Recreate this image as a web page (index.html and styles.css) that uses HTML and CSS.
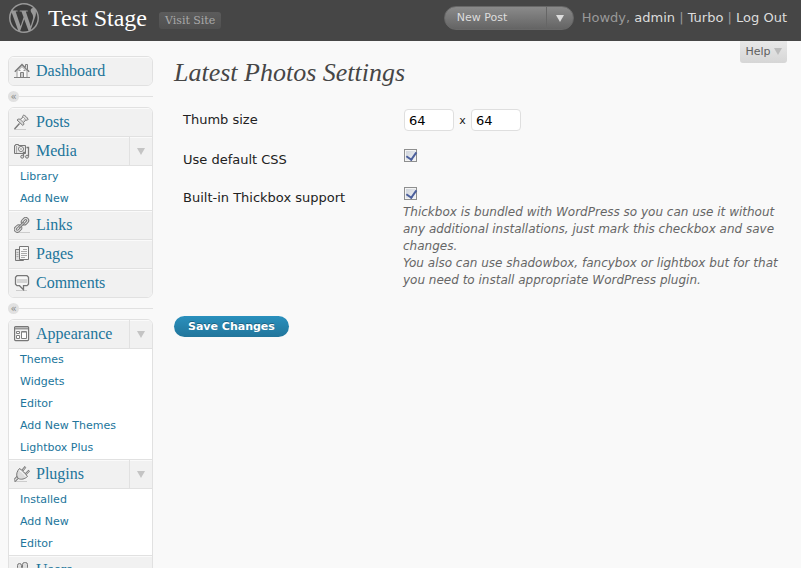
FILE: index.html
```html
<!DOCTYPE html>
<html lang="en">
<head>
<meta charset="utf-8">
<title>Latest Photos Settings</title>
<link rel="stylesheet" href="styles.css">
</head>
<body>
<header class="topbar">
  <svg class="logo" viewBox="0 0 24 24" aria-hidden="true"><circle cx="12" cy="12" r="11.4" fill="#3b3b3b"/><path fill="#999" d="M21.469 6.825c.84 1.537 1.318 3.3 1.318 5.175 0 3.979-2.156 7.456-5.363 9.325l3.295-9.527c.615-1.54.82-2.771.82-3.864 0-.405-.026-.78-.07-1.11m-7.981.105c.647-.03 1.232-.105 1.232-.105.582-.075.514-.93-.067-.899 0 0-1.755.135-2.88.135-1.064 0-2.85-.15-2.85-.15-.585-.03-.661.855-.075.885 0 0 .54.061 1.125.09l1.68 4.605-2.37 7.08L5.354 6.9c.649-.03 1.234-.1 1.234-.1.585-.075.516-.93-.065-.896 0 0-1.746.138-2.874.138-.2 0-.438-.008-.69-.015C4.911 3.15 8.235 1.215 12 1.215c2.809 0 5.365 1.072 7.286 2.833-.046-.003-.091-.009-.141-.009-1.06 0-1.812.923-1.812 1.914 0 .89.513 1.643 1.06 2.531.411.72.89 1.643.89 2.977 0 .915-.354 1.994-.821 3.479l-1.075 3.585-3.9-11.61.001.014zM12 22.784c-1.059 0-2.081-.153-3.048-.437l3.237-9.406 3.315 9.087c.024.053.05.101.078.149-1.12.393-2.325.609-3.582.609M1.211 12c0-1.564.336-3.05.935-4.39L7.29 21.709C3.694 19.96 1.212 16.271 1.211 12M12 0C5.385 0 0 5.385 0 12s5.385 12 12 12 12-5.385 12-12S18.615 0 12 0"/></svg>
  <a class="site-title" href="#">Test Stage</a>
  <a class="visit" href="#">Visit Site</a>
  <div class="quick">
    <a class="quick-main" href="#">New Post</a>
    <button class="quick-toggle" type="button" aria-label="More actions"><span class="arrow"></span></button>
  </div>
  <div class="user">Howdy, <a href="#">admin</a> | <a href="#">Turbo</a> | <a href="#">Log Out</a></div>
</header>

<div class="page">
  <nav class="sidebar">
    <ul class="menu">
      <li><div class="row">
        <svg class="icon" viewBox="0 0 16 16"><path d="M3 8.500 8 3.500l5 5v6H3z" fill="#f8f8f8" stroke="#999"/><path d="M.8 8.700 8 1.500l7.200 7.200" fill="none" stroke="#777" stroke-width="1.400"/><path d="M11.500 4.500v-3h2v5" fill="#ddd" stroke="#808080"/><path d="M6.500 14V9.500h3V14" fill="#ccc" stroke="#808080"/><path d="M0 14.500h16" stroke="#808080"/><path d="M5 7.500h1.500M9.500 7.500H11" stroke="#999"/></svg>
        <a href="#">Dashboard</a></div></li>
    </ul>
    <div class="separator"><button type="button" aria-label="Collapse menu">«</button></div>

    <ul class="menu">
      <li><div class="row">
        <svg class="icon" viewBox="0 0 16 16"><path d="M0 15.500h12" stroke="#ccc"/><path d="M.5 15 5.500 9.500" stroke="#777" stroke-width="1.400"/><path d="M9.500 1.200C10.500.8 14 4 14 5.500c-.5 1-1.800.8-2.400.6L9.500 8.500c.6 1.200.3 2.500-.6 3L3 6c.6-1 2-1.200 3.200-.6L8.700 3.300c-.2-.7-.1-1.700.8-2.100z" fill="#dcdcdc" stroke="#777"/><path d="M6.200 5.600 9.300 8.500M9 3.200 11.500 5.700" stroke="#888" stroke-width=".8"/><path d="M8 6 10 4" stroke="#fff"/></svg>
        <a href="#">Posts</a></div></li>
      <li><div class="row">
        <svg class="icon" viewBox="0 0 16 16"><path d="M.5 2.500h1v-1h3v1h7v8H.5z" fill="#e4e4e4" stroke="#777"/><path d="M2.500 3v7" stroke="#aaa"/><circle cx="7" cy="6" r="2.500" fill="#fff" stroke="#777"/><circle cx="7" cy="6" r="1" fill="#aaa"/><path d="M9.500 14V9.500h2M14.500 13.500v-9h-2" fill="none" stroke="#777" stroke-width="1.300"/><circle cx="8.200" cy="13.700" r="1.500" fill="#ddd" stroke="#777"/><circle cx="13" cy="13.700" r="1.500" fill="#ddd" stroke="#777"/></svg>
        <a href="#">Media</a><button class="toggle" type="button" aria-label="Toggle Media"><span class="arrow"></span></button></div>
        <ul class="sub"><li><a href="#">Library</a></li><li><a href="#">Add New</a></li></ul></li>
      <li><div class="row">
        <svg class="icon" viewBox="0 0 16 16"><path d="M4 15.500h12" stroke="#ccc"/><g fill="none"><g stroke="#777" stroke-width="3"><rect x="8" y="2.200" width="6" height="4" rx="2" transform="rotate(-45 11 4.200)"/><rect x="1" y="9.600" width="6" height="4" rx="2" transform="rotate(-45 4 11.600)"/></g><g stroke="#ddd" stroke-width="1.200"><rect x="8" y="2.200" width="6" height="4" rx="2" transform="rotate(-45 11 4.200)"/><rect x="1" y="9.600" width="6" height="4" rx="2" transform="rotate(-45 4 11.600)"/></g></g><path d="M5 10.500 10 5.500" stroke="#777" stroke-width="2.600"/><path d="M5 10.500 10 5.500" stroke="#e4e4e4"/></svg>
        <a href="#">Links</a></div></li>
      <li><div class="row">
        <svg class="icon" viewBox="0 0 16 16"><path d="M1.500 3.500h8v11h-8z" fill="#ddd" stroke="#777"/><path d="M2.500 6.500h2M2.500 8.500h2M2.500 10.500h2" stroke="#aaa"/><path d="M5.500 .5h9v13h-9z" fill="#f8f8f8" stroke="#777"/><path d="M9 3.500h4M7 5.500h6M7 7.500h6M7 9.500h6M7 11.500h4" stroke="#aaa"/></svg>
        <a href="#">Pages</a></div></li>
      <li><div class="row">
        <svg class="icon" viewBox="0 0 16 16"><path d="M2 15.500h11" stroke="#ccc"/><path d="M3 .7h10l1.500 1.500v7L13 10.700H9.500v4l-4-4H3L1.500 9.200v-7z" fill="#f6f6f6" stroke="#777" stroke-width="1.300"/><path d="M3 4h10v4H3z" fill="#d4d4d4"/></svg>
        <a href="#">Comments</a></div></li>
    </ul>
    <div class="separator"><button type="button" aria-label="Collapse menu">«</button></div>

    <ul class="menu">
      <li><div class="row">
        <svg class="icon" viewBox="0 0 16 16"><rect x=".6" y=".6" width="14" height="14" rx="1" fill="#f4f4f4" stroke="#777" stroke-width="1.200"/><path d="M1 2.500h13" stroke="#999" stroke-width="2"/><path d="M2.500 5.500h3v2h-3zM2.500 9.500h3v3h-3zM7.500 5.500h5v7h-5z" fill="#fff" stroke="#808080"/><path d="M8 6.500h4" stroke="#bbb"/></svg>
        <a href="#">Appearance</a><button class="toggle" type="button" aria-label="Toggle Appearance"><span class="arrow"></span></button></div>
        <ul class="sub"><li><a href="#">Themes</a></li><li><a href="#">Widgets</a></li><li><a href="#">Editor</a></li><li><a href="#">Add New Themes</a></li><li><a href="#">Lightbox Plus</a></li></ul></li>
      <li><div class="row">
        <svg class="icon" viewBox="0 0 16 16"><path d="M1 15.500h12" stroke="#ccc"/><path d="M0 15 4 11" stroke="#777" stroke-width="3.200"/><path d="M.5 14.500 4 11" stroke="#ddd" stroke-width="1.200"/><path d="M8 5 11.500.8M11.500 8.300 15.300 4.500" stroke="#777" stroke-width="2.200"/><path d="M8 5 11.300 1.200M11.500 8.300 15 4.800" stroke="#eee" stroke-width=".7"/><path d="M5.500 2.500C8 4 11.500 7.500 13.500 10.500 11 13 7 14 4.500 12.500L3.200 11C2 8.500 3 5 5.500 2.500z" fill="#dcdcdc" stroke="#777"/><path d="M5.500 4.500C8 6 10 8 11.700 10.500" stroke="#fff" fill="none"/></svg>
        <a href="#">Plugins</a><button class="toggle" type="button" aria-label="Toggle Plugins"><span class="arrow"></span></button></div>
        <ul class="sub"><li><a href="#">Installed</a></li><li><a href="#">Add New</a></li><li><a href="#">Editor</a></li></ul></li>
      <li><div class="row">
        <svg class="icon" viewBox="0 0 16 16"><rect x="3.500" y="1.500" width="4" height="6" rx="2" fill="#ddd" stroke="#777"/><rect x="8.500" y=".5" width="5" height="7" rx="2" fill="#ddd" stroke="#777"/><path d="M2 15V9.500h5V15M7.500 15V8.500h7V15" fill="#ddd" stroke="#777"/></svg>
        <a href="#">Users</a></div></li>
    </ul>
  </nav>

  <main class="content">
    <button class="help" type="button">Help <span class="arrow"></span></button>
    <h1>Latest Photos Settings</h1>
    <form>
      <div class="fields">
        <label for="w">Thumb size</label>
        <div class="size"><input id="w" type="text" value="64"><span>x</span><input type="text" value="64" aria-label="Thumb height"></div>
        <label for="css">Use default CSS</label>
        <div class="check"><input id="css" type="checkbox" checked></div>
        <label for="thick">Built-in Thickbox support</label>
        <div class="check"><input id="thick" type="checkbox" checked>
          <p>Thickbox is bundled with WordPress so you can use it without any additional installations, just mark this checkbox and save changes.<br>You also can use shadowbox, fancybox or lightbox but for that you need to install appropriate WordPress plugin.</p></div>
      </div>
      <button class="save" type="submit">Save Changes</button>
    </form>
  </main>
</div>
</body>
</html>
```
FILE: styles.css
```css
* { box-sizing: border-box; }
body {
  margin: 0;
  height: 100vh;
  overflow: hidden;
  background: #f9f9f9;
  color: #222;
  font: 13px/18px Verdana, "DejaVu Sans", sans-serif;
}
a { color: #21759b; text-decoration: none; }
ul { list-style: none; margin: 0; padding: 0; }
button { font: inherit; padding: 0; border: 0; background: none; cursor: pointer; }
.arrow {
  display: inline-block;
  border: 4px solid transparent;
  border-top: 7px solid #c4c4c4;
  border-bottom: 0;
}

/* Top bar */
.topbar {
  display: flex;
  align-items: center;
  height: 41px;
  padding: 0 14px 5px 9px;
  background: #464646;
}
.logo { width: 30px; height: 30px; margin-right: 9px; }
.site-title { color: #fff; font: 24px/30px Georgia, "Liberation Serif", serif; }
.visit {
  margin: 5px 0 0 12px;
  padding: 0 6px;
  border-radius: 3px;
  background: linear-gradient(#5c5c5c, #505050);
  color: #aaa;
  font: 11px/17px "DejaVu Serif", serif;
}
.quick {
  display: flex;
  width: 130px;
  height: 24px;
  margin: 0 8px 0 auto;
  border-radius: 12px;
  border: 1px solid #686868;
  background: linear-gradient(#8a8a8a, #646464);
}
.quick-main { flex: 1; padding-left: 12px; color: #ddd; font-size: 11px; line-height: 22px; }
.quick-toggle { width: 27px; border-left: 1px solid #666; line-height: 10px; }
.quick-toggle .arrow { border-top-color: #ddd; }
.user { color: #999; white-space: nowrap; }
.user a { color: #ddd; }

/* Sidebar */
.page { display: flex; }
.sidebar { flex: none; width: 145px; margin: 15px 0 0 8px; }
.menu {
  border: 1px solid #e1e1e1;
  border-radius: 6px;
  background: #fff;
  overflow: hidden;
}
.menu > li + li { border-top: 1px solid #e1e1e1; }
.row {
  display: flex;
  align-items: center;
  height: 28px;
  padding: 0 0 1px 5px;
  border-top: 1px solid #fafafa;
  background: #f1f1f1;
}
.icon { width: 16px; height: 16px; margin-right: 6px; }
.row a { flex: 1; font: 16px/20px Georgia, "Liberation Serif", serif; }
.toggle { width: 23px; height: 28px; border-left: 1px solid #e1e1e1; line-height: 10px; }
.sub { border-top: 1px solid #e1e1e1; font-size: 11px; line-height: 22px; }
.sub li { padding-left: 11px; }
.separator { display: flex; align-items: center; height: 21px; }
.separator button {
  width: 11px;
  height: 11px;
  border-radius: 50%;
  background: #e1e1e1;
  color: #888;
  font-size: 10px;
  line-height: 10px;
}
.separator::after { content: ""; flex: 1; height: 1px; background: #e1e1e1; }

/* Settings form */
.content { position: relative; flex: 1; min-width: 0; padding: 15px 14px 0 21px; }
.help {
  position: absolute;
  top: 0;
  right: 14px;
  padding: 0 5px;
  border-radius: 0 0 3px 3px;
  background: linear-gradient(#e8e8e8, #d6d6d6);
  color: #606060;
  font-size: 11px;
  line-height: 22px;
}
.help .arrow { border-top-color: #bbb; }
h1 {
  margin: 0;
  color: #464646;
  font: italic 26px/34px Georgia, "Liberation Serif", serif;
}
.fields {
  display: grid;
  grid-template-columns: 220px 1fr;
  row-gap: 16px;
  padding: 19px 0 0 9px;
}
.fields label { padding-top: 2px; }
.size { display: flex; align-items: flex-start; height: 24px; }
.size input {
  width: 50px;
  height: 22px;
  padding: 0 4px;
  border: 1px solid #dfdfdf;
  border-radius: 4px;
  background: #fff;
  color: #000;
  font: inherit;
}
.size span { width: 17px; text-align: center; font-size: 11px; line-height: 24px; }
.size, .check input { margin-left: 1px; }
.check { min-height: 22px; }
.check input {
  appearance: none;
  display: block;
  width: 13px;
  height: 13px;
  margin-top: 0;
  margin-bottom: 0;
  border: 1px solid #8e8f8f;
  background: linear-gradient(135deg, #cbd0d8, #f4f6f8);
  box-shadow: inset 0 0 0 1px #f4f4f4;
}
.check input:checked::after {
  content: "";
  display: block;
  width: 5px;
  height: 8px;
  margin: 0 0 0 3px;
  border: solid #4b5f9c;
  border-width: 0 2px 2px 0;
  transform: rotate(35deg);
}
.check p { margin: 4px 0 0; color: #666; font-size: 12px; line-height: 17px; font-style: italic; }
.save {
  margin-top: 27px;
  padding: 0 14px;
  border-radius: 11px;
  background: linear-gradient(#2a90bd, #21759b);
  color: #fff;
  font-size: 11px;
  font-weight: bold;
  line-height: 21px;
  text-shadow: 0 -1px 0 rgba(0, 0, 0, 0.3);
}
```
